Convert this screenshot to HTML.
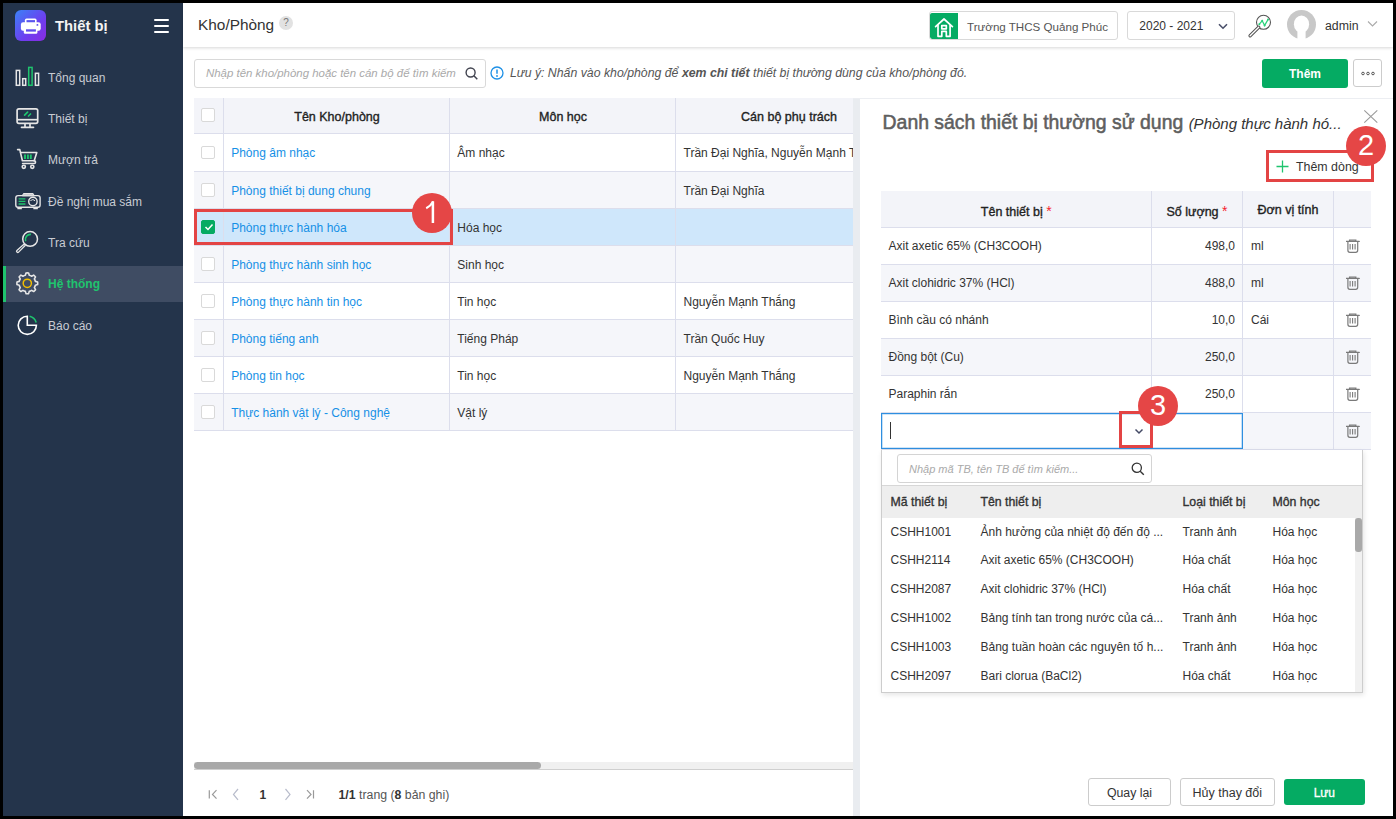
<!DOCTYPE html>
<html><head><meta charset="utf-8">
<style>

*{box-sizing:border-box;margin:0;padding:0}
html,body{width:1396px;height:819px;overflow:hidden;background:#000;font-family:"Liberation Sans",sans-serif;color:#333;font-size:13px}
.abs{position:absolute}
#app{position:absolute;left:3px;top:3px;width:1390px;height:813px;background:#fff;overflow:hidden}
#side{position:absolute;left:0;top:0;width:180px;height:813px;background:#24344b}
.logo{position:absolute;left:12px;top:7px;width:31px;height:31px;border-radius:6px;background:linear-gradient(135deg,#3b82f6 0%,#6d3ef0 60%,#8a2be2 100%)}
.brand{position:absolute;left:52px;top:15px;color:#f4f4f4;font-weight:bold;font-size:14.8px}
.burger{position:absolute;left:151px;top:16px;width:15px;height:14px}
.burger i{display:block;height:1.8px;background:#fff;margin-bottom:4.2px;border-radius:1px}
.nav{position:absolute;left:0;width:180px;height:37px;color:#c9ccd3;font-size:12px}
.nav span{position:absolute;left:45px;top:12px;white-space:nowrap}
.nav svg{position:absolute;left:12px;top:7px}
.nav.act{background:#3f4c63}
.nav.act:before{content:"";position:absolute;left:0;top:0;width:3px;height:36px;background:#1fc46e}
.nav.act span{color:#1fc46e;font-weight:bold}

#hdr{position:absolute;left:180px;top:0;width:1210px;height:44px;background:#fff;box-shadow:0 1px 3px rgba(0,0,0,.16)}
.ttl{position:absolute;left:15px;top:13px;font-size:15.4px;color:#333}
.qm{position:absolute;left:96px;top:13px;width:14px;height:14px;border-radius:7px;background:#e2e2e2;color:#777;font-size:10px;text-align:center;line-height:14px}
.school{position:absolute;left:746px;top:8px;width:188.5px;height:29px;border:1px solid #d9d9d9;border-radius:3px;overflow:hidden}
.school .ic{position:absolute;left:0;top:1px;width:28px;height:26px;background:#05ab63;border-radius:2px 0 0 2px}
.school span{position:absolute;left:37px;top:8px;font-size:11.6px;color:#555;white-space:nowrap}
.year{position:absolute;left:944.3px;top:8.3px;width:107.5px;height:28.5px;border:1px solid #d9d9d9;border-radius:3px}
.year span{position:absolute;left:11px;top:6.5px;font-size:12px;color:#333}
.avatar{position:absolute;left:1103px;top:7px;width:30px;height:30px;border-radius:15px;background:#c8c8c8;overflow:hidden}
.uname{position:absolute;left:1142px;top:16px;font-size:12.3px;color:#333}
.sbox{position:absolute;left:191px;top:56px;width:292px;height:29px;border:1px solid #d9d9d9;border-radius:3px}
.sbox span{position:absolute;left:11px;top:7px;font-size:11.45px;color:#aaa;font-style:italic;white-space:nowrap}
.note{position:absolute;left:507px;top:63px;font-size:12.3px;color:#555;font-style:italic;white-space:nowrap}
.btn-g{position:absolute;background:#05ab63;color:#fff;font-weight:bold;border-radius:3px;text-align:center;font-size:13px}
.btn-w{position:absolute;background:#fff;border:1px solid #ccc;border-radius:3px;text-align:center;font-size:13px;color:#333}

#tbl{position:absolute;left:191px;top:95px;width:659px;height:720px;overflow:hidden}
.row{position:absolute;left:0;width:900px;border-bottom:1px solid #dcdeec}
.row .c{position:absolute;top:0;height:100%;border-right:1px solid #dcdeec}
.row .t{position:absolute;white-space:nowrap;font-size:12px;color:#333}
.hd{background:#f3f4f9}
.hd .t{font-weight:normal;font-size:12.5px;color:#222;-webkit-text-stroke:.35px #222}
.alt{background:#f5f6fa}
.sel{background:#cfe7fb}
.lnk{color:#1590e6!important}
.cb{position:absolute;left:7.3px;width:13.5px;height:13.5px;border:1px solid #d9d9d9;border-radius:2px;background:#fff}
.cb.on{background:#05ab63;border-color:#05ab63}

#strip{position:absolute;left:850px;top:95px;width:7px;height:718px;background:#e9ecf0}
#drw{position:absolute;left:857px;top:95px;width:533px;height:718px;background:#fff}
#drwline{position:absolute;left:850px;top:95px;width:540px;height:1px;background:#eceef2;z-index:2}
.dt{position:absolute;left:22.6px;top:13px;font-size:19.4px;color:#5f5f5f;white-space:nowrap;-webkit-text-stroke:.55px #5f5f5f}
.dt i{font-size:15px;color:#333;-webkit-text-stroke:0}
#dtbl{position:absolute;left:21px;top:93px;width:489.5px}
.drow{position:absolute;left:0;width:489.5px;border-bottom:1px solid #dcdeec}
.drow .c{position:absolute;top:0;height:100%;border-right:1px solid #dcdeec}
.drow .t{position:absolute;white-space:nowrap;font-size:12px;color:#333}
.drow.hd .t{font-weight:normal;font-size:12.5px;color:#222;-webkit-text-stroke:.35px #222}
.req{color:#f5222d;-webkit-text-stroke:0;font-size:14px}
.trash{position:absolute;left:464.8px}
#dd{position:absolute;left:21px;top:351.5px;width:482px;height:243px;background:#fff;border:1px solid #cdcdcd;border-top:none;box-shadow:1px 2px 5px rgba(0,0,0,.10)}
.ddsearch{position:absolute;left:14.5px;top:4px;width:255.5px;height:29px;border:1px solid #d4d4d4;border-radius:3px}
.ddsearch span{position:absolute;left:11.5px;top:8px;font-size:11px;color:#aaa;font-style:italic;white-space:nowrap}
.ddh{position:absolute;left:0;top:35.5px;width:480px;height:32.5px;background:#eeeeee;border-top:1px solid #d7d7d7}
.ddh .t,.ddr .t{position:absolute;white-space:nowrap;font-size:12px;color:#333}
.ddh .t{font-weight:normal;font-size:12.3px;color:#333;top:9px;-webkit-text-stroke:.35px #333}
.ddr{position:absolute;left:0;width:473px;height:28.9px}
.ddr .t{top:7px}

.rb{position:absolute;border:3px solid #e34444}
.rc{position:absolute;width:40px;height:40px;border-radius:20px;background:#e54646;color:#fff;font-size:29px;text-align:center;line-height:38.5px}

.hc{text-align:center}
</style></head><body>
<div id="app">
  <div id="side">
    <div class="logo"><svg width="31" height="31" viewBox="0 0 31 31"><rect x="9.9" y="8.6" width="11.7" height="6" rx="1.6" fill="#fff"/><rect x="11.5" y="10.1" width="8.5" height="4" fill="#5a55ee"/><rect x="5.9" y="12.2" width="19.8" height="8.6" rx="2.2" fill="#fff"/><rect x="8.8" y="18.4" width="13.6" height="5.3" rx="1.3" fill="#fff"/><rect x="11" y="19.3" width="9.9" height="2.3" fill="#5e4cee"/><circle cx="22.4" cy="14.9" r=".95" fill="#5e50ee"/></svg></div>
    <div class="brand">Thiết bị</div>
    <div class="burger"><i></i><i></i><i></i></div>

    <div class="nav" style="top:55.5px"><span>Tổng quan</span></div>
    <div class="nav" style="top:96.8px"><span>Thiết bị</span></div>
    <div class="nav" style="top:138.2px"><span>Mượn trả</span></div>
    <div class="nav" style="top:179.5px"><span>Đề nghị mua sắm</span></div>
    <div class="nav" style="top:220.8px"><span>Tra cứu</span></div>
    <div class="nav act" style="top:263px;height:36px"><span style="top:11.2px">Hệ thống</span></div>
    <div class="nav" style="top:303.5px"><span>Báo cáo</span></div>
    <svg class="abs" style="left:-3px;top:-3px" width="183" height="345" viewBox="0 0 183 345">
      <g fill="none" stroke="#e6e6e6" stroke-width="1.5">
        <rect x="16.3" y="70.4" width="3.4" height="14.9"/><rect x="22.7" y="78.7" width="3.0" height="6.6"/><rect x="35.4" y="73.3" width="3.2" height="12"/>
      </g>
      <rect x="28.7" y="67.4" width="3.4" height="17.9" fill="none" stroke="#1fc46e" stroke-width="1.5"/>
      <g fill="none" stroke="#e6e6e6" stroke-width="1.7">
        <rect x="17.1" y="108.8" width="20.6" height="14.6" rx="1.8"/><path d="M17.1 119.7h20.6"/><path d="M25 124v2.6M30 124v2.6M21.5 127.3h12" stroke-linecap="round"/>
      </g>
      <path d="M24.6 115.2l3-3M28.5 116l2-2" stroke="#1fc46e" stroke-width="1.7" stroke-linecap="round"/>
      <g fill="none" stroke="#e6e6e6" stroke-width="1.6" stroke-linejoin="round" stroke-linecap="round">
        <path d="M17.6 149.6h2.2l2.6 11.1h11.8"/><path d="M20.6 152.5h16.2l-2.6 8.2"/><path d="M34.2 160.7c1.8 0 1.8 2.8 0 2.8h-11.6"/>
        <circle cx="23.8" cy="166.8" r="1.6"/><circle cx="32.3" cy="166.8" r="1.6"/>
      </g>
      <path d="M25 154.5v4.6M27.9 154.5v4.6M30.8 154.5v4.6" stroke="#1fc46e" stroke-width="1.9"/>
      <g fill="none" stroke="#e6e6e6" stroke-width="1.4">
        <rect x="15.8" y="195.6" width="24.3" height="11.6" rx="2.2"/><path d="M22.3 195.8l1.2-2.3h9.6l1.2 2.3z" fill="#c9cbd0" stroke-width="1"/><circle cx="32.9" cy="201.5" r="4.2"/><path d="M30.5 201c.8-1.8 3.7-1.8 4.5 0" stroke-width="1"/><path d="M18 207.2v1.4h3.2v-1.4M34 207.2v1.4h3.2v-1.4" stroke-width="1.3"/>
      </g>
      <path d="M18.6 198.8h6.8M18.6 201.4h6.8M18.6 204h6.8" stroke="#1fc46e" stroke-width="1.3"/>
      <g fill="none" stroke="#e6e6e6" stroke-width="1.5">
        <circle cx="30.1" cy="238.9" r="7.4"/>
        <path d="M23.9 244.2l1.3 1.3-6.6 6.6c-.5.5-1.1.5-1.6 0l-.1-.1c-.5-.5-.5-1.1 0-1.6z" stroke-width="1.3" stroke-linejoin="round"/>
      </g>
      <path d="M25.6 241.2a5.2 5.2 0 0 1 5.4-6.8" fill="none" stroke="#1fc46e" stroke-width="1.6"/>
      <path d="M25.36 275.23L26.00 272.98A10.4 10.4 0 0 1 28.60 272.98L29.24 275.23A8.3 8.3 0 0 1 31.64 276.22L31.64 276.22L33.67 275.08A10.4 10.4 0 0 1 35.52 276.93L34.38 278.96A8.3 8.3 0 0 1 35.37 281.36L35.37 281.36L37.62 282.00A10.4 10.4 0 0 1 37.62 284.60L35.37 285.24A8.3 8.3 0 0 1 34.38 287.64L34.38 287.64L35.52 289.67A10.4 10.4 0 0 1 33.67 291.52L31.64 290.38A8.3 8.3 0 0 1 29.24 291.37L29.24 291.37L28.60 293.62A10.4 10.4 0 0 1 26.00 293.62L25.36 291.37A8.3 8.3 0 0 1 22.96 290.38L22.96 290.38L20.93 291.52A10.4 10.4 0 0 1 19.08 289.67L20.22 287.64A8.3 8.3 0 0 1 19.23 285.24L19.23 285.24L16.98 284.60A10.4 10.4 0 0 1 16.98 282.00L19.23 281.36A8.3 8.3 0 0 1 20.22 278.96L20.22 278.96L19.08 276.93A10.4 10.4 0 0 1 20.93 275.08L22.96 276.22A8.3 8.3 0 0 1 25.36 275.23Z" fill="none" stroke="#e6e6e6" stroke-width="1.6" stroke-linejoin="round"/>
      <circle cx="27.3" cy="283.3" r="4.1" fill="none" stroke="#f2be00" stroke-width="1.5"/>
      <path d="M27.3 316.2a9.1 9.1 0 1 0 9.1 9.1h-9.1z" fill="none" stroke="#fff" stroke-width="1.6" stroke-linejoin="miter"/>
      <path d="M29.6 316.3a9.1 9.1 0 0 1 6.6 6.1" fill="none" stroke="#1fc46e" stroke-width="1.6"/>
    </svg>
  </div>

  <div id="hdr">
    <div class="ttl">Kho/Phòng</div><div class="qm">?</div>
    <div class="school"><div class="ic"><svg width="28" height="28" viewBox="0 0 28 28"><g fill="none" stroke="#fff" stroke-width="1.7" stroke-linejoin="round" stroke-linecap="round"><path d="M5.6 13.6L14 6l8.4 7.6"/><path d="M8 11.9V23.3H11.8V18.4H16.3V23.3H20.1V11.9"/><rect x="11.8" y="12.6" width="4.5" height="3.2"/></g></svg></div><span>Trường THCS Quảng Phúc</span></div>
    <div class="year"><span>2020 - 2021</span><svg class="abs" style="left:90px;top:11px" width="10" height="7" viewBox="0 0 10 7"><path d="M1 1.2l4 4 4-4" fill="none" stroke="#4a4f6a" stroke-width="1.6"/></svg></div>
    <svg class="abs" style="left:1064px;top:10px" width="26" height="26" viewBox="0 0 26 26"><circle cx="16.5" cy="9.3" r="7" fill="#fff" stroke="#555" stroke-width="1.1"/><path d="M11.7 14.3l-8.6 8.4" stroke="#555" stroke-width="3.4" stroke-linecap="round"/><path d="M11.7 14.3l-8.6 8.4" stroke="#fff" stroke-width="1.3" stroke-linecap="round"/><path d="M12.3 11.2l2.9-3.4 2.4 4.6 3.4-5.8" fill="none" stroke="#2ad27a" stroke-width="1.2"/><g fill="#2ad27a"><circle cx="12.3" cy="11.2" r="1"/><circle cx="15.2" cy="7.8" r="1"/><circle cx="17.6" cy="12.4" r="1"/><circle cx="21" cy="6.6" r="1"/></g></svg>
    <svg class="abs" style="left:1103.8px;top:6.6px" width="29" height="30" viewBox="0 0 29 30"><circle cx="14.5" cy="14.5" r="14.5" fill="#c8c8c8"/><ellipse cx="14.5" cy="14.2" rx="7.6" ry="8.6" fill="#fff"/><rect x="10.4" y="18" width="8.2" height="12" fill="#fff"/><path d="M3 26.5Q14.5 33 26 26.5V30H3z" fill="#fff"/></svg>
    <div class="uname">admin</div>
    <svg class="abs" style="left:1184px;top:17px" width="11" height="8" viewBox="0 0 11 8"><path d="M1 1.5l4.5 4.5 4.5-4.5" fill="none" stroke="#aaa" stroke-width="1.1"/></svg>
  </div>
  <div class="sbox"><span>Nhập tên kho/phòng hoặc tên cán bộ để tìm kiếm</span><svg class="abs" style="left:270px;top:7px" width="14" height="14" viewBox="0 0 14 14"><circle cx="5.6" cy="5.5" r="4.5" fill="none" stroke="#41434f" stroke-width="1.4"/><path d="M8.9 8.8l3.4 3.4" stroke="#41434f" stroke-width="1.5"/></svg></div>
  <svg class="abs" style="left:487px;top:63px" width="14" height="14" viewBox="0 0 14 14"><circle cx="7" cy="7" r="6" fill="none" stroke="#1e90e6" stroke-width="1.3"/><path d="M7 3.5v4.3" stroke="#1e90e6" stroke-width="1.5"/><circle cx="7" cy="10" r=".9" fill="#1e90e6"/></svg>
  <div class="note">Lưu ý: Nhấn vào kho/phòng để <b>xem chi tiết</b> thiết bị thường dùng của kho/phòng đó.</div>
  <div class="btn-g" style="left:1259px;top:56px;width:86px;height:29px;line-height:30.5px;font-size:12px">Thêm</div>
  <div class="btn-w" style="left:1350px;top:56px;width:29px;height:28px"><svg class="abs" style="left:7px;top:11px" width="14" height="5" viewBox="0 0 14 5"><g fill="none" stroke="#555" stroke-width="1"><circle cx="2" cy="2.5" r="1.3"/><circle cx="7" cy="2.5" r="1.3"/><circle cx="12" cy="2.5" r="1.3"/></g></svg></div>
  <div id="tbl">
    <div class="row hd" style="top:0;height:36px"><div class="c" style="left:0px;width:30px"></div><div class="c" style="left:30px;width:226px"></div><div class="c" style="left:256px;width:226px"></div><div class="c" style="left:482px;width:300px"></div><div class="cb" style="top:10px"></div><div class="t hc" style="left:30px;width:226px;top:12px">Tên Kho/phòng</div><div class="t hc" style="left:256px;width:226px;top:12px">Môn học</div><div class="t hc" style="left:482px;width:226px;top:12px">Cán bộ phụ trách</div></div>
    <div class="row " style="top:36px;height:38px"><div class="c" style="left:0px;width:30px"></div><div class="c" style="left:30px;width:226px"></div><div class="c" style="left:256px;width:226px"></div><div class="c" style="left:482px;width:300px"></div><div class="cb" style="top:11.75px"></div><div class="t lnk" style="left:37.2px;top:11.5px">Phòng âm nhạc</div><div class="t" style="left:263.3px;top:11.5px">Âm nhạc</div><div class="t" style="left:489.5px;top:11.5px">Trần Đại Nghĩa, Nguyễn Mạnh Thắng</div></div>
    <div class="row alt" style="top:74px;height:37px"><div class="c" style="left:0px;width:30px"></div><div class="c" style="left:30px;width:226px"></div><div class="c" style="left:256px;width:226px"></div><div class="c" style="left:482px;width:300px"></div><div class="cb" style="top:11.25px"></div><div class="t lnk" style="left:37.2px;top:12.0px">Phòng thiết bị dung chung</div><div class="t" style="left:263.3px;top:12.0px"></div><div class="t" style="left:489.5px;top:12.0px">Trần Đại Nghĩa</div></div>
    <div class="row sel" style="top:111px;height:37px"><div class="c" style="left:0px;width:30px"></div><div class="c" style="left:30px;width:226px"></div><div class="c" style="left:256px;width:226px"></div><div class="c" style="left:482px;width:300px"></div><div class="cb on" style="top:11.25px"><svg class="abs" style="left:1.5px;top:2px" width="10" height="8" viewBox="0 0 10 8"><path d="M1.5 4l2.5 2.5 4.5-5" fill="none" stroke="#fff" stroke-width="1.5"/></svg></div><div class="t lnk" style="left:37.2px;top:12.0px">Phòng thực hành hóa</div><div class="t" style="left:263.3px;top:12.0px">Hóa học</div><div class="t" style="left:489.5px;top:12.0px"></div></div>
    <div class="row alt" style="top:148px;height:37px"><div class="c" style="left:0px;width:30px"></div><div class="c" style="left:30px;width:226px"></div><div class="c" style="left:256px;width:226px"></div><div class="c" style="left:482px;width:300px"></div><div class="cb" style="top:11.25px"></div><div class="t lnk" style="left:37.2px;top:12.0px">Phòng thực hành sinh học</div><div class="t" style="left:263.3px;top:12.0px">Sinh học</div><div class="t" style="left:489.5px;top:12.0px"></div></div>
    <div class="row " style="top:185px;height:37px"><div class="c" style="left:0px;width:30px"></div><div class="c" style="left:30px;width:226px"></div><div class="c" style="left:256px;width:226px"></div><div class="c" style="left:482px;width:300px"></div><div class="cb" style="top:11.25px"></div><div class="t lnk" style="left:37.2px;top:12.0px">Phòng thực hành tin học</div><div class="t" style="left:263.3px;top:12.0px">Tin học</div><div class="t" style="left:489.5px;top:12.0px">Nguyễn Mạnh Thắng</div></div>
    <div class="row alt" style="top:222px;height:37px"><div class="c" style="left:0px;width:30px"></div><div class="c" style="left:30px;width:226px"></div><div class="c" style="left:256px;width:226px"></div><div class="c" style="left:482px;width:300px"></div><div class="cb" style="top:11.25px"></div><div class="t lnk" style="left:37.2px;top:12.0px">Phòng tiếng anh</div><div class="t" style="left:263.3px;top:12.0px">Tiếng Pháp</div><div class="t" style="left:489.5px;top:12.0px">Trần Quốc Huy</div></div>
    <div class="row " style="top:259px;height:37px"><div class="c" style="left:0px;width:30px"></div><div class="c" style="left:30px;width:226px"></div><div class="c" style="left:256px;width:226px"></div><div class="c" style="left:482px;width:300px"></div><div class="cb" style="top:11.25px"></div><div class="t lnk" style="left:37.2px;top:12.0px">Phòng tin học</div><div class="t" style="left:263.3px;top:12.0px">Tin học</div><div class="t" style="left:489.5px;top:12.0px">Nguyễn Mạnh Thắng</div></div>
    <div class="row alt" style="top:296px;height:37px"><div class="c" style="left:0px;width:30px"></div><div class="c" style="left:30px;width:226px"></div><div class="c" style="left:256px;width:226px"></div><div class="c" style="left:482px;width:300px"></div><div class="cb" style="top:11.25px"></div><div class="t lnk" style="left:37.2px;top:12.0px">Thực hành vật lý - Công nghệ</div><div class="t" style="left:263.3px;top:12.0px">Vật lý</div><div class="t" style="left:489.5px;top:12.0px"></div></div>
  </div>
  <div class="abs" style="left:191px;top:759px;width:659px;height:8px;background:#f0f0f0;border-bottom:1px solid #cfcfcf"></div>
  <div class="abs" style="left:191px;top:759px;width:347px;height:7px;background:#a9a9a9;border-radius:3.5px"></div>
  <svg class="abs" style="left:204px;top:785px" width="120" height="14" viewBox="0 0 120 14"><g fill="none" stroke-width="1.2"><path d="M2.3 2.2v8.4M9.5 2.2l-4 4.2 4 4.2" stroke="#999"/><path d="M31 1l-4.5 5.4 4.5 5.4" stroke="#b8bccb"/><path d="M78.5 1l4.5 5.4-4.5 5.4" stroke="#b8bccb"/><path d="M100 2.2l4 4.2-4 4.2M106.5 2.2v8.4" stroke="#999"/></g></svg>
  <div class="abs" style="left:256.5px;top:785px;font-size:12px;font-weight:bold;color:#333">1</div>
  <div class="abs" style="left:335.5px;top:785px;font-size:12.3px;color:#555;white-space:nowrap"><b style="color:#333">1/1</b> trang (<b style="color:#333">8</b> bản ghi)</div>
  <div id="strip"></div><div id="drwline"></div>
  <div id="drw">
    <div class="dt">Danh sách thiết bị thường sử dụng <i>(Phòng thực hành hó...</i></div>
    <svg class="abs" style="left:503px;top:11px" width="16" height="15" viewBox="0 0 16 15"><path d="M1.3 1.3l13 12.4M14.3 1.3L1.3 13.7" stroke="#9a9a9a" stroke-width="1.1"/></svg>
    <svg class="abs" style="left:416px;top:62px" width="13" height="13" viewBox="0 0 13 13"><path d="M6.5 0.5v12M0.5 6.5h12" stroke="#1fc46e" stroke-width="1.3"/></svg>
    <div class="abs" style="left:436px;top:62px;font-size:12.4px;color:#333;white-space:nowrap">Thêm dòng</div>
    <div id="dtbl">
      <div class="drow hd" style="top:0;height:37px;background:#f3f4f9"><div class="c" style="left:0;width:270.5px"></div><div class="c" style="left:270.5px;width:91px"></div><div class="c" style="left:361.5px;width:91.2px"></div><div class="t hc" style="left:0;width:270.5px;top:12px">Tên thiết bị <span class="req">*</span></div><div class="t hc" style="left:270.5px;width:91px;top:12px">Số lượng <span class="req">*</span></div><div class="t hc" style="left:361.5px;width:91px;top:12px">Đơn vị tính</div></div>
      <div class="drow " style="top:37px;height:37px"><div class="c" style="left:0;width:270.5px"></div><div class="c" style="left:270.5px;width:91px"></div><div class="c" style="left:361.5px;width:91.2px"></div><div class="t" style="left:7.5px;top:11px">Axit axetic 65% (CH3COOH)</div><div class="t" style="right:135.5px;top:11px">498,0</div><div class="t" style="left:370px;top:11px">ml</div><svg class="trash" style="top:11px" width="14" height="16" viewBox="0 0 14 16"><g fill="none" stroke="#7a7a7a" stroke-width="1.2"><path d="M.4 2.4h12.8" stroke-width="1.4" stroke-linecap="round"/><path d="M3.6 2.2V1.1h6.2v1.1" stroke-width="1.3"/><path d="M1.9 3v8.3a2 2 0 0 0 2 2h5.8a2 2 0 0 0 2-2V3"/><path d="M4.1 4.9v5.6M6.6 4.9v5.6M9.1 4.9v5.6" stroke-width="1.1"/></g></svg></div>
      <div class="drow alt" style="top:74px;height:37px"><div class="c" style="left:0;width:270.5px"></div><div class="c" style="left:270.5px;width:91px"></div><div class="c" style="left:361.5px;width:91.2px"></div><div class="t" style="left:7.5px;top:11px">Axit clohidric 37% (HCl)</div><div class="t" style="right:135.5px;top:11px">488,0</div><div class="t" style="left:370px;top:11px">ml</div><svg class="trash" style="top:11px" width="14" height="16" viewBox="0 0 14 16"><g fill="none" stroke="#7a7a7a" stroke-width="1.2"><path d="M.4 2.4h12.8" stroke-width="1.4" stroke-linecap="round"/><path d="M3.6 2.2V1.1h6.2v1.1" stroke-width="1.3"/><path d="M1.9 3v8.3a2 2 0 0 0 2 2h5.8a2 2 0 0 0 2-2V3"/><path d="M4.1 4.9v5.6M6.6 4.9v5.6M9.1 4.9v5.6" stroke-width="1.1"/></g></svg></div>
      <div class="drow " style="top:111px;height:37px"><div class="c" style="left:0;width:270.5px"></div><div class="c" style="left:270.5px;width:91px"></div><div class="c" style="left:361.5px;width:91.2px"></div><div class="t" style="left:7.5px;top:11px">Bình cầu có nhánh</div><div class="t" style="right:135.5px;top:11px">10,0</div><div class="t" style="left:370px;top:11px">Cái</div><svg class="trash" style="top:11px" width="14" height="16" viewBox="0 0 14 16"><g fill="none" stroke="#7a7a7a" stroke-width="1.2"><path d="M.4 2.4h12.8" stroke-width="1.4" stroke-linecap="round"/><path d="M3.6 2.2V1.1h6.2v1.1" stroke-width="1.3"/><path d="M1.9 3v8.3a2 2 0 0 0 2 2h5.8a2 2 0 0 0 2-2V3"/><path d="M4.1 4.9v5.6M6.6 4.9v5.6M9.1 4.9v5.6" stroke-width="1.1"/></g></svg></div>
      <div class="drow alt" style="top:148px;height:37px"><div class="c" style="left:0;width:270.5px"></div><div class="c" style="left:270.5px;width:91px"></div><div class="c" style="left:361.5px;width:91.2px"></div><div class="t" style="left:7.5px;top:11px">Đồng bột (Cu)</div><div class="t" style="right:135.5px;top:11px">250,0</div><div class="t" style="left:370px;top:11px"></div><svg class="trash" style="top:11px" width="14" height="16" viewBox="0 0 14 16"><g fill="none" stroke="#7a7a7a" stroke-width="1.2"><path d="M.4 2.4h12.8" stroke-width="1.4" stroke-linecap="round"/><path d="M3.6 2.2V1.1h6.2v1.1" stroke-width="1.3"/><path d="M1.9 3v8.3a2 2 0 0 0 2 2h5.8a2 2 0 0 0 2-2V3"/><path d="M4.1 4.9v5.6M6.6 4.9v5.6M9.1 4.9v5.6" stroke-width="1.1"/></g></svg></div>
      <div class="drow " style="top:185px;height:37px"><div class="c" style="left:0;width:270.5px"></div><div class="c" style="left:270.5px;width:91px"></div><div class="c" style="left:361.5px;width:91.2px"></div><div class="t" style="left:7.5px;top:11px">Paraphin rắn</div><div class="t" style="right:135.5px;top:11px">250,0</div><div class="t" style="left:370px;top:11px"></div><svg class="trash" style="top:11px" width="14" height="16" viewBox="0 0 14 16"><g fill="none" stroke="#7a7a7a" stroke-width="1.2"><path d="M.4 2.4h12.8" stroke-width="1.4" stroke-linecap="round"/><path d="M3.6 2.2V1.1h6.2v1.1" stroke-width="1.3"/><path d="M1.9 3v8.3a2 2 0 0 0 2 2h5.8a2 2 0 0 0 2-2V3"/><path d="M4.1 4.9v5.6M6.6 4.9v5.6M9.1 4.9v5.6" stroke-width="1.1"/></g></svg></div>
      <div class="drow alt" style="top:222px;height:37px"><div class="c" style="left:0;width:270.5px"></div><div class="c" style="left:270.5px;width:91px"></div><div class="c" style="left:361.5px;width:91.2px"></div><svg class="trash" style="top:11px" width="14" height="16" viewBox="0 0 14 16"><g fill="none" stroke="#7a7a7a" stroke-width="1.2"><path d="M.4 2.4h12.8" stroke-width="1.4" stroke-linecap="round"/><path d="M3.6 2.2V1.1h6.2v1.1" stroke-width="1.3"/><path d="M1.9 3v8.3a2 2 0 0 0 2 2h5.8a2 2 0 0 0 2-2V3"/><path d="M4.1 4.9v5.6M6.6 4.9v5.6M9.1 4.9v5.6" stroke-width="1.1"/></g></svg><div class="abs" style="left:0;top:0;width:361.5px;height:36px;background:#fff;border:1.5px solid #2f8fe0;box-shadow:inset 0 0 0 .6px rgba(47,143,224,.45)"></div><div class="abs" style="left:9px;top:9px;width:1px;height:17px;background:#333"></div><svg class="abs" style="left:252.5px;top:15px" width="10" height="7" viewBox="0 0 10 7"><path d="M1.5 1.5l3.5 3.5 3.5-3.5" fill="none" stroke="#444a66" stroke-width="1.5"/></svg></div>
    </div>
    <div id="dd">
      <div class="ddsearch"><span>Nhập mã TB, tên TB để tìm kiếm...</span><svg class="abs" style="left:233px;top:7px" width="14" height="14" viewBox="0 0 14 14"><circle cx="5.8" cy="5.8" r="4.6" fill="none" stroke="#333" stroke-width="1.3"/><path d="M9.2 9.2l3.6 3.6" stroke="#333" stroke-width="1.4"/></svg></div>
      <div class="ddh"><div class="t" style="left:8.5px">Mã thiết bị</div><div class="t" style="left:98.5px">Tên thiết bị</div><div class="t" style="left:300.5px">Loại thiết bị</div><div class="t" style="left:390.5px">Môn học</div></div>
      <div class="ddr" style="top:68.0px"><div class="t" style="left:8.5px">CSHH1001</div><div class="t" style="left:98.5px">Ảnh hưởng của nhiệt độ đến độ ...</div><div class="t" style="left:300.5px">Tranh ảnh</div><div class="t" style="left:390.5px">Hóa học</div></div>
      <div class="ddr" style="top:96.9px"><div class="t" style="left:8.5px">CSHH2114</div><div class="t" style="left:98.5px">Axit axetic 65% (CH3COOH)</div><div class="t" style="left:300.5px">Hóa chất</div><div class="t" style="left:390.5px">Hóa học</div></div>
      <div class="ddr" style="top:125.8px"><div class="t" style="left:8.5px">CSHH2087</div><div class="t" style="left:98.5px">Axit clohidric 37% (HCl)</div><div class="t" style="left:300.5px">Hóa chất</div><div class="t" style="left:390.5px">Hóa học</div></div>
      <div class="ddr" style="top:154.7px"><div class="t" style="left:8.5px">CSHH1002</div><div class="t" style="left:98.5px">Bảng tính tan trong nước của cá...</div><div class="t" style="left:300.5px">Tranh ảnh</div><div class="t" style="left:390.5px">Hóa học</div></div>
      <div class="ddr" style="top:183.6px"><div class="t" style="left:8.5px">CSHH1003</div><div class="t" style="left:98.5px">Bảng tuần hoàn các nguyên tố h...</div><div class="t" style="left:300.5px">Tranh ảnh</div><div class="t" style="left:390.5px">Hóa học</div></div>
      <div class="ddr" style="top:212.5px"><div class="t" style="left:8.5px">CSHH2097</div><div class="t" style="left:98.5px">Bari clorua (BaCl2)</div><div class="t" style="left:300.5px">Hóa chất</div><div class="t" style="left:390.5px">Hóa học</div></div>
      <div class="abs" style="left:473px;top:68px;width:7px;height:174px;background:#f1f1f1"></div><div class="abs" style="left:473px;top:68.5px;width:6.5px;height:33.5px;background:#a9a9a9;border-radius:3px"></div>
    </div>
    <div class="btn-w" style="left:228px;top:680px;width:83px;height:27.5px;line-height:28px;font-size:12.3px">Quay lại</div>
    <div class="btn-w" style="left:320px;top:680px;width:94.6px;height:27.5px;line-height:28px;font-size:12.5px">Hủy thay đổi</div>
    <div class="btn-g" style="left:423.5px;top:680.5px;width:81.7px;height:26.5px;line-height:28px;font-size:12px;font-weight:normal;-webkit-text-stroke:.3px #fff">Lưu</div>
  </div>
</div>
<div class="rb" style="left:193.5px;top:209px;width:259.5px;height:36px"></div>
<div class="rb" style="left:1266px;top:150px;width:108px;height:32px"></div>
<div class="rb" style="left:1119px;top:411px;width:33.5px;height:37px"></div>
<div class="rc" style="left:412px;top:193px"><svg class="abs" style="left:0;top:0" width="40" height="40" viewBox="0 0 40 40"><path d="M20.9 8.3V30" stroke="#fff" stroke-width="2.5"/><path d="M21.2 8.6C19.6 11.6 17.2 13.8 14.2 15.2" fill="none" stroke="#fff" stroke-width="2.2"/></svg></div>
<div class="rc" style="left:1346px;top:126px">2</div>
<div class="rc" style="left:1138px;top:386px">3</div>
</body></html>
